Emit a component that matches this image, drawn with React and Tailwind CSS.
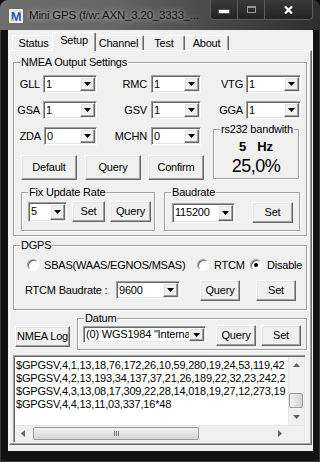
import React from 'react';
import clsx from 'clsx';

const raised =
  'border border-t-white border-l-white border-r-[#696969] border-b-[#696969] shadow-[inset_-1px_-1px_0_#a0a0a0,inset_1px_1px_0_#e3e3e3]';
const sunken =
  'border border-t-[#a0a0a0] border-l-[#a0a0a0] border-r-white border-b-white shadow-[inset_1px_1px_0_#696969,inset_-1px_-1px_0_#e3e3e3]';

function Btn({ className, children }) {
  return (
    <div className={clsx('flex items-center justify-center bg-[#f0f0f0] leading-none', raised, className)}>
      {children}
    </div>
  );
}

function Arrow({ dir = 'down', color = '#000' }) {
  const d = {
    down: 'M0 0h7L3.5 4z',
    up: 'M0 4h7L3.5 0z',
  }[dir];
  if (dir === 'left' || dir === 'right') {
    return (
      <svg width="4" height="7" viewBox="0 0 4 7">
        <path d={dir === 'left' ? 'M4 0v7L0 3.5z' : 'M0 0v7L4 3.5z'} fill={color} />
      </svg>
    );
  }
  return (
    <svg width="7" height="4" viewBox="0 0 7 4">
      <path d={d} fill={color} />
    </svg>
  );
}

function Combo({ className, value }) {
  return (
    <div className={clsx('flex bg-white p-[1px]', sunken, className)}>
      <span className="flex-1 flex items-center pl-[1px] overflow-hidden whitespace-nowrap leading-none">{value}</span>
      <span className={clsx('w-[15px] flex items-center justify-center bg-[#f0f0f0]', raised)}>
        <Arrow />
      </span>
    </div>
  );
}

function Group({ label, className, children }) {
  return (
    <div className={clsx('relative border border-[#a0a0a0] shadow-[inset_1px_1px_0_#fff,1px_1px_0_#fff]', className)}>
      <span className="absolute left-[6px] -top-[7px] px-[1px] bg-[#f0f0f0] leading-[13px] whitespace-nowrap">{label}</span>
      {children}
    </div>
  );
}

function Radio({ checked }) {
  return (
    <span className="w-[12px] h-[12px] shrink-0 rounded-full bg-white flex items-center justify-center border border-t-[#a0a0a0] border-l-[#a0a0a0] border-r-white border-b-white shadow-[inset_1px_1px_0_#696969]">
      {checked && <span className="w-[4px] h-[4px] rounded-full bg-black" />}
    </span>
  );
}

function Tab({ label, selected, className }) {
  if (selected) {
    return (
      <div
        className={clsx(
          'relative z-10 -mb-[1px] h-[19px] -mx-[2px] flex items-center justify-center pb-[3px] bg-[#f0f0f0] rounded-t-[2px] border-t border-l border-r border-t-white border-l-white border-r-[#696969] shadow-[inset_-1px_0_0_#a0a0a0]',
          className
        )}
      >
        {label}
      </div>
    );
  }
  return (
    <div
      className={clsx(
        'h-[15px] flex items-center justify-center bg-[#f0f0f0] rounded-t-[2px] border-t border-l border-r border-t-white border-l-white border-r-[#696969] shadow-[inset_-1px_0_0_#a0a0a0]',
        className
      )}
    >
      {label}
    </div>
  );
}

function TitleBar() {
  return (
    <div className="h-[30px] flex items-start rounded-t-[7px] bg-[linear-gradient(90deg,#6e6e6e_0%,#666_35%,#4a4a4a_65%,#2e2e2e_100%)]">
      <svg className="mt-[9px] ml-[9px]" width="14" height="14" viewBox="0 0 14 14">
        <rect x="0" y="0" width="14" height="14" rx="1" fill="#eef3fb" />
        <text x="7" y="12" textAnchor="middle" fontFamily="Liberation Sans, Arial, sans-serif" fontWeight="bold" fontSize="13" fill="#2a4fb0">
          M
        </text>
        <circle cx="3" cy="11" r="1.3" fill="#f2c200" />
        <circle cx="11.5" cy="3" r="1.2" fill="#f2c200" />
        <circle cx="5" cy="2.5" r="0.9" fill="#f7d84a" />
      </svg>
      <span className="mt-[8px] ml-[6px] text-[11.5px] tracking-[-0.2px] leading-[14px] text-[#111] [text-shadow:0_0_5px_rgba(255,255,255,0.85)]">
        Mini GPS (f/w: AXN_3.20_3333_...
      </span>
      <div className="ml-auto mr-[7px] flex h-[20px] rounded-b-[4px] overflow-hidden border border-t-0 border-[#5c5c5c] bg-[linear-gradient(180deg,#3a3a3a,#222)]">
        <div className="w-[27px] flex items-center justify-center border-r border-[#5c5c5c]">
          <span className="w-[10px] h-[3px] bg-white mt-[3px] shadow-[0_0_0_1px_#555]" />
        </div>
        <div className="w-[27px] flex items-center justify-center border-r border-[#5c5c5c]">
          <span className="w-[9px] h-[7px] border border-t-2 border-[#9a9a9a]" />
        </div>
        <div className="w-[47px] flex items-center justify-center">
          <svg width="9" height="8" viewBox="0 0 9 8">
            <path d="M1 0.5L8 7.5M8 0.5L1 7.5" stroke="#fff" strokeWidth="2.2" />
          </svg>
        </div>
      </div>
    </div>
  );
}

const logLines = [
  '$GPGSV,4,1,13,18,76,172,26,10,59,280,19,24,53,119,42',
  '$GPGSV,4,2,13,193,34,137,37,21,26,189,22,32,23,242,2',
  '$GPGSV,4,3,13,08,17,309,22,28,14,018,19,27,12,273,19',
  '$GPGSV,4,4,13,11,03,337,16*48',
];

const thumb =
  'rounded-[2px] border border-[#9a9a9a] bg-[linear-gradient(90deg,#f4f4f4,#e2e2e2_50%,#d4d4d4)]';

function LogBox() {
  return (
    <div className={clsx('ml-[3px] mt-[5px] w-[293px] h-[88px] bg-white p-[1px] flex flex-col', sunken)}>
      <div className="flex-1 flex min-h-0">
        <div className="flex-1 overflow-hidden whitespace-nowrap pl-[1px] pt-[2px] leading-[13px]">
          {logLines.map((l) => (
            <div key={l}>{l}</div>
          ))}
        </div>
        <div className="w-[16px] flex flex-col bg-[#f0f0f0] border-l border-[#e6e6e6]">
          <div className="h-[16px] flex items-center justify-center">
            <Arrow dir="up" color="#606060" />
          </div>
          <div className="flex-1">
            <div className={clsx('mt-[20px] h-[15px] w-[14px]', thumb)} />
          </div>
          <div className="h-[16px] flex items-center justify-center">
            <Arrow dir="down" color="#606060" />
          </div>
        </div>
      </div>
      <div className="h-[16px] flex bg-[#f0f0f0] border-t border-[#e6e6e6]">
        <div className="w-[16px] flex items-center justify-center">
          <Arrow dir="left" color="#606060" />
        </div>
        <div className="flex-1 flex items-center">
          <div className="ml-[2px] w-[166px] h-[13px] flex items-center justify-center gap-[1px] rounded-[2px] border border-[#9a9a9a] bg-[linear-gradient(180deg,#f4f4f4,#e2e2e2_50%,#d4d4d4)]">
            <span className="w-[1px] h-[5px] bg-[#777]" />
            <span className="w-[1px] h-[5px] bg-[#777]" />
            <span className="w-[1px] h-[5px] bg-[#777]" />
          </div>
        </div>
        <div className="w-[16px] flex items-center justify-center">
          <Arrow dir="right" color="#606060" />
        </div>
        <div className="w-[16px] bg-[#f0f0f0]" />
      </div>
    </div>
  );
}

export default function App() {
  return (
    <div className="w-[320px] h-[462px] bg-[#0b0b0b]">
      <div className="w-[320px] h-[462px] rounded-t-[8px] overflow-hidden bg-[#121212] shadow-[inset_0_0_0_1px_#3a3a3a] font-['Liberation_Sans',Arial,sans-serif] text-[11px] tracking-[-0.2px] text-black">
        <TitleBar />
        <div className="ml-[8px] w-[305px] h-[421px] bg-[#f0f0f0]">
          <div className="h-[20px] flex items-end pl-[4px]">
            <Tab label="Status" className="w-[42px] border-r-0 shadow-none" />
            <Tab label="Setup" selected className="w-[44px]" />
            <Tab label="Channel" className="w-[50px] border-l-0" />
            <Tab label="Test" className="w-[41px] border-l-0" />
            <Tab label="About" className="w-[44px] border-l-0" />
          </div>
          <div className="ml-[1px] w-[303px] h-[395px] flex flex-col border border-t-white border-l-white border-r-[#696969] border-b-[#696969] shadow-[inset_-1px_-1px_0_#a0a0a0]">
            <Group label="NMEA Output Settings" className="ml-[3px] mt-[11px] w-[294px] h-[174px] shrink-0">
              <div className="flex">
                <div className="w-[191px] flex flex-col pt-[12px]">
                  <div className="flex items-center h-[18px]">
                    <span className="w-[26px] text-right">GLL</span>
                    <Combo className="ml-[3px] w-[54px] h-[18px]" value="1" />
                    <span className="w-[50px] text-right">RMC</span>
                    <Combo className="ml-[4px] w-[50px] h-[18px]" value="1" />
                  </div>
                  <div className="flex items-center h-[18px] mt-[8px]">
                    <span className="w-[26px] text-right">GSA</span>
                    <Combo className="ml-[3px] w-[54px] h-[18px]" value="1" />
                    <span className="w-[50px] text-right">GSV</span>
                    <Combo className="ml-[4px] w-[50px] h-[18px]" value="1" />
                  </div>
                  <div className="flex items-center h-[18px] mt-[8px]">
                    <span className="w-[27px] text-right">ZDA</span>
                    <Combo className="ml-[3px] w-[53px] h-[18px]" value="0" />
                    <span className="w-[50px] text-right">MCHN</span>
                    <Combo className="ml-[4px] w-[50px] h-[18px]" value="0" />
                  </div>
                  <div className="flex mt-[10px] ml-[7px]">
                    <Btn className="w-[56px] h-[25px]">Default</Btn>
                    <Btn className="ml-[8px] w-[56px] h-[25px]">Query</Btn>
                    <Btn className="ml-[7px] w-[56px] h-[25px]">Confirm</Btn>
                  </div>
                </div>
                <div className="flex-1 flex flex-col pt-[12px]">
                  <div className="flex items-center h-[18px]">
                    <span className="w-[38px] text-right">VTG</span>
                    <Combo className="ml-[3px] w-[55px] h-[18px]" value="1" />
                  </div>
                  <div className="flex items-center h-[18px] mt-[8px]">
                    <span className="w-[38px] text-right">GGA</span>
                    <Combo className="ml-[3px] w-[55px] h-[18px]" value="1" />
                  </div>
                  <Group label="rs232 bandwith" className="mt-[10px] ml-[8px] w-[86px] h-[50px]">
                    <div className="flex flex-col items-center pt-[9px]">
                      <div className="h-[14px] flex items-center font-bold text-[13px] tracking-normal leading-none">
                        <span>5</span>
                        <span className="ml-[11px]">Hz</span>
                      </div>
                      <div className="mt-[3px] h-[20px] flex items-center text-[18px] tracking-[-0.5px] leading-none">25,0%</div>
                    </div>
                  </Group>
                </div>
              </div>
              <div className="flex mt-[12px] ml-[7px]">
                <Group label="Fix Update Rate" className="w-[134px] h-[39px]">
                  <div className="flex items-center mt-[8px] ml-[6px]">
                    <Combo className="w-[39px] h-[20px]" value="5" />
                    <Btn className="ml-[5px] w-[33px] h-[21px]">Set</Btn>
                    <Btn className="ml-[5px] w-[41px] h-[21px]">Query</Btn>
                  </div>
                </Group>
                <Group label="Baudrate" className="ml-[9px] w-[136px] h-[39px]">
                  <div className="flex items-center mt-[9px] ml-[7px]">
                    <Combo className="w-[63px] h-[20px]" value="115200" />
                    <Btn className="ml-[17px] w-[41px] h-[21px]">Set</Btn>
                  </div>
                </Group>
              </div>
            </Group>

            <Group label="DGPS" className="ml-[3px] mt-[9px] w-[294px] h-[65px] shrink-0">
              <div className="flex items-center h-[14px] mt-[12px] ml-[13px]">
                <Radio />
                <span className="ml-[5px] w-[144px] whitespace-nowrap">SBAS(WAAS/EGNOS/MSAS)</span>
                <span className="ml-[9px]">
                  <Radio />
                </span>
                <span className="ml-[5px] w-[31px]">RTCM</span>
                <span className="ml-[5px]">
                  <Radio checked />
                </span>
                <span className="ml-[5px]">Disable</span>
              </div>
              <div className="flex items-center h-[22px] mt-[7px] ml-[11px]">
                <span className="w-[83px] whitespace-nowrap">RTCM Baudrate :</span>
                <Combo className="ml-[8px] w-[64px] h-[18px]" value="9600" />
                <Btn className="ml-[20px] w-[40px] h-[21px]">Query</Btn>
                <Btn className="ml-[16px] w-[40px] h-[21px]">Set</Btn>
              </div>
            </Group>

            <div className="flex items-start mt-[8px] pl-[5px] shrink-0">
              <Btn className="mt-[8px] w-[55px] h-[21px]">NMEA Log</Btn>
              <Group label="Datum" className="ml-[7px] w-[230px] h-[32px]">
                <div className="flex items-start ml-[5px]">
                  <Combo className="mt-[7px] w-[123px] h-[17px]" value={'(0) WGS1984 "Interna'} />
                  <Btn className="mt-[6px] ml-[10px] w-[40px] h-[21px]">Query</Btn>
                  <Btn className="mt-[6px] ml-[5px] w-[40px] h-[21px]">Set</Btn>
                </div>
              </Group>
            </div>

            <LogBox />
          </div>
        </div>
      </div>
    </div>
  );
}
